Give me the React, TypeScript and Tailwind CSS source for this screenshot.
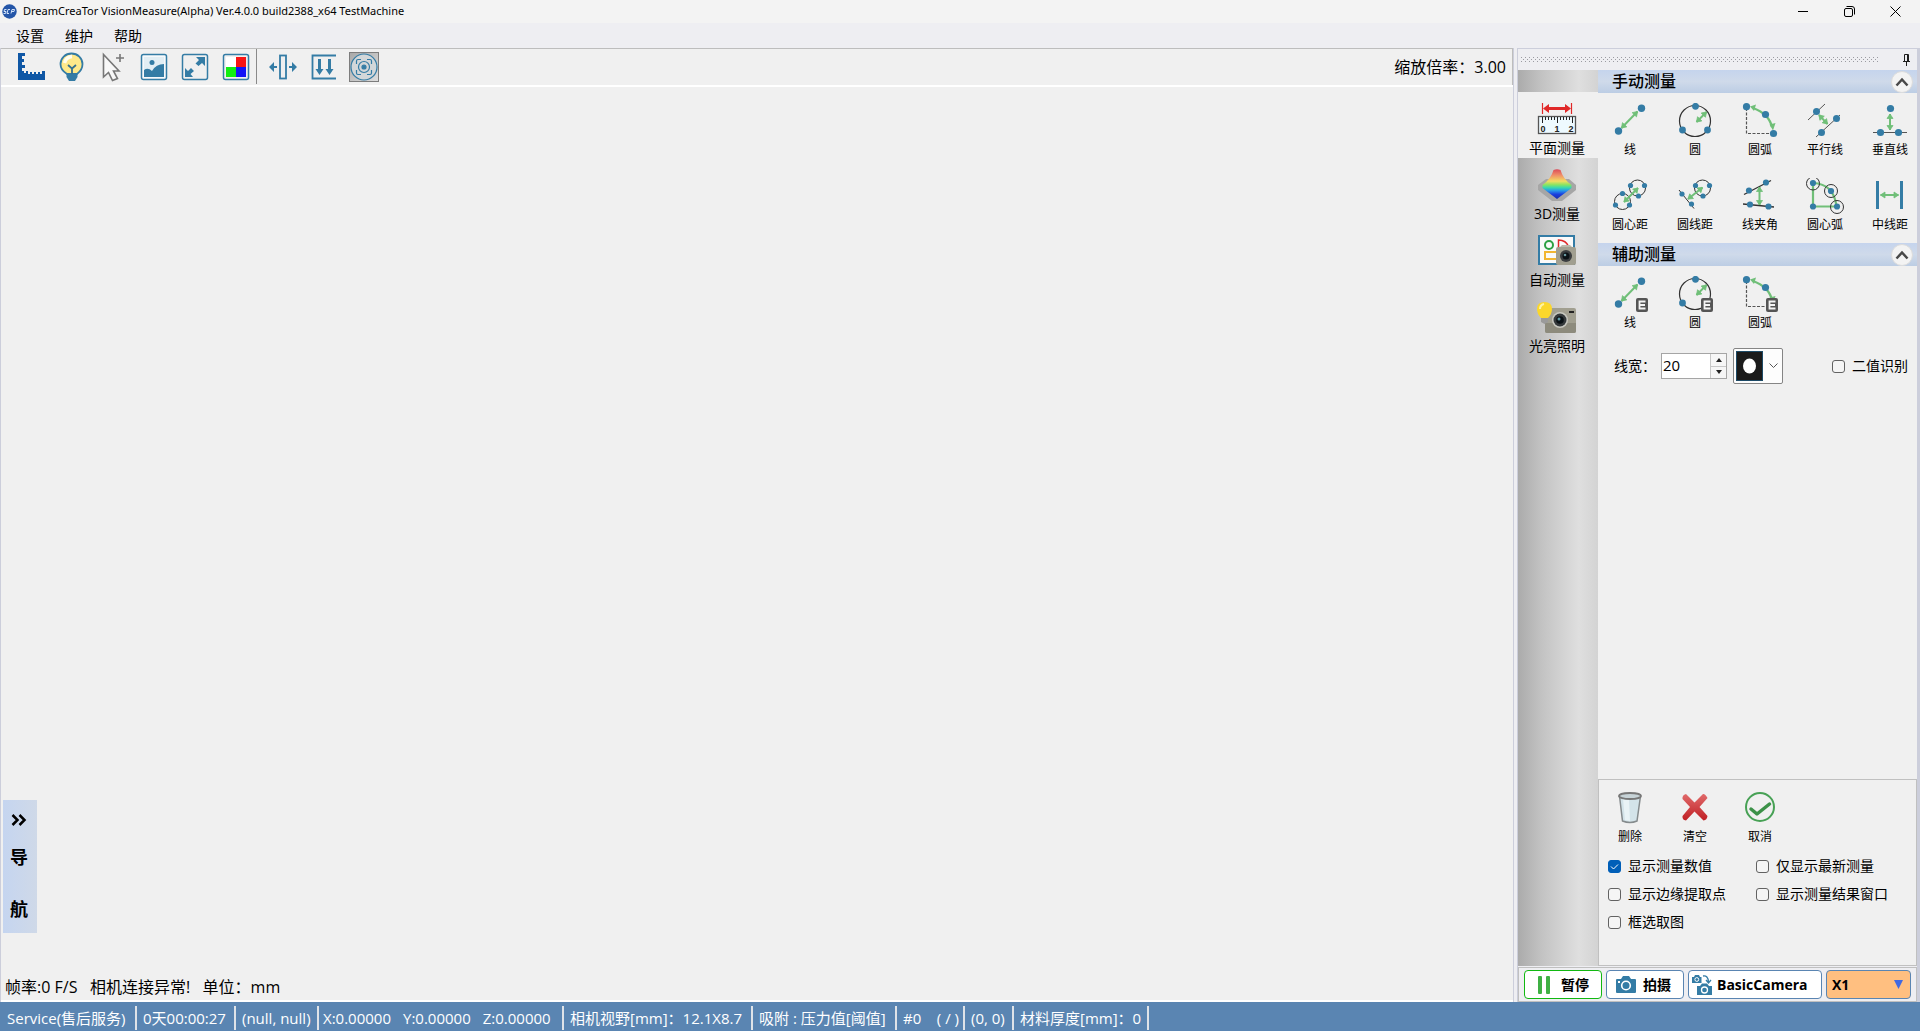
import { useState, type ReactNode } from "react";
import clsx from "clsx";

const BLUE = "#347ca5";
const GREEN = "#70bf78";
const INK = "#333333";

/* ---------- shared icon parts ---------- */

function Dot({ x, y, r = 3 }: { x: number; y: number; r?: number }) {
  return <circle cx={x} cy={y} r={r} fill={BLUE} />;
}

// double-headed arrow between two points
function Arrow({ x1, y1, x2, y2 }: { x1: number; y1: number; x2: number; y2: number }) {
  const angle = (Math.atan2(y2 - y1, x2 - x1) * 180) / Math.PI;
  return (
    <g stroke={GREEN} fill={GREEN}>
      <line x1={x1} y1={y1} x2={x2} y2={y2} strokeWidth="2" />
      <path d="M0 0L-4.5 -3V3Z" strokeWidth="0.8" transform={`translate(${x2} ${y2}) rotate(${angle})`} />
      <path d="M0 0L-4.5 -3V3Z" strokeWidth="0.8" transform={`translate(${x1} ${y1}) rotate(${angle + 180})`} />
    </g>
  );
}

function ExtendBadge() {
  return (
    <g>
      <rect x="25" y="22" width="12" height="14" rx="2" fill="#555" />
      <path d="M34.5 25.5H28.5V32.5H34.5M28.5 29H34" fill="none" stroke="#f4f4f4" strokeWidth="1.8" />
    </g>
  );
}

function ToolSvg({ children }: { children: ReactNode }) {
  return (
    <svg width="38" height="37" viewBox="0 0 38 37" fill="none" aria-hidden="true">
      {children}
    </svg>
  );
}

const lineArt = (
  <>
    <Arrow x1={10.5} y1={25} x2={26.5} y2={8.5} />
    <Dot x={7.5} y={28} r={3.7} />
    <Dot x={30.5} y={5.2} r={3.7} />
  </>
);

const circleArt = (
  <>
    <circle cx="19" cy="18" r="15.5" stroke={INK} strokeWidth="1.2" />
    <Arrow x1={20.5} y1={19} x2={30.5} y2={9} />
    <Dot x={19.5} y={3.3} r={3.4} />
    <Dot x={6.5} y={27} r={3.4} />
    <Dot x={31.5} y={27} r={3.4} />
  </>
);

const arcArt = (
  <>
    <path d="M5.5 5V30.5H31" stroke="#555" strokeWidth="1.2" strokeDasharray="3 1.5" />
    <path d="M12 5Q28 11 31 24" stroke={GREEN} strokeWidth="2.4" />
    <path d="M9 3.5L15 1.500L13 8ZM32 27.500L28.500 21.500L34.500 20Z" fill={GREEN} />
    <Dot x={5.5} y={3.7} r={3.6} />
    <Dot x={24.5} y={11.5} r={3.6} />
    <Dot x={32.5} y={30.5} r={3.6} />
  </>
);

type Tool = { label: string; icon: ReactNode };

const manualTools: Tool[] = [
  { label: "线", icon: lineArt },
  { label: "圆", icon: circleArt },
  { label: "圆弧", icon: arcArt },
  {
    label: "平行线",
    icon: (
      <>
        <path d="M2 17L19 1M10 34L34 12" stroke="#555" />
        <Arrow x1={13} y1={12} x2={21.5} y2={21} />
        <Dot x={10.5} y={8.5} r={3.5} />
        <Dot x={30.5} y={15.5} r={3.5} />
        <Dot x={15.5} y={29.5} r={3.5} />
      </>
    ),
  },
  {
    label: "垂直线",
    icon: (
      <>
        <path d="M2 29.5H36" stroke="#555" />
        <Arrow x1={19} y1={11} x2={19} y2={27} />
        <Dot x={19.5} y={5.5} r={3.6} />
        <Dot x={9.5} y={29.5} r={3.6} />
        <Dot x={27.5} y={29.5} r={3.6} />
      </>
    ),
  },
  {
    label: "圆心距",
    icon: (
      <>
        <circle cx="26.5" cy="10" r="8" stroke={INK} />
        <circle cx="11.5" cy="23.5" r="8" stroke={INK} />
        <Arrow x1={13} y1={24} x2={27} y2={10} />
        <Dot x={19.5} y={7.5} r={2.6} />
        <Dot x={33.5} y={7.5} r={2.6} />
        <Dot x={27.5} y={18} r={2.6} />
        <Dot x={11.5} y={15.5} r={2.6} />
        <Dot x={4.5} y={27} r={2.6} />
        <Dot x={18.5} y={27} r={2.6} />
      </>
    ),
  },
  {
    label: "圆线距",
    icon: (
      <>
        <circle cx="26.5" cy="10" r="8" stroke={INK} />
        <path d="M3 12L18 30.5" stroke={INK} />
        <Arrow x1={12} y1={21} x2={26.5} y2={9.5} />
        <Dot x={19.5} y={7.5} r={2.6} />
        <Dot x={33.5} y={7.5} r={2.6} />
        <Dot x={27} y={18} r={2.6} />
        <Dot x={6} y={16} r={2.6} />
        <Dot x={15.5} y={26} r={2.6} />
      </>
    ),
  },
  {
    label: "线夹角",
    icon: (
      <>
        <path d="M3 16.5L30 2.5M2 26L33 29" stroke={INK} strokeWidth="1.4" />
        <Arrow x1={18.5} y1={9} x2={18.5} y2={27} />
        <Dot x={8} y={12.5} r={3.1} />
        <Dot x={25} y={4.5} r={3.1} />
        <Dot x={9} y={26.5} r={3.1} />
        <Dot x={27.5} y={28.5} r={3.1} />
      </>
    ),
  },
  {
    label: "圆心弧",
    icon: (
      <>
        <path d="M7 5Q28 6 30.5 28.5H7Z" stroke={GREEN} strokeWidth="2.2" />
        <circle cx="7" cy="5.5" r="6.5" stroke={INK} />
        <circle cx="25" cy="13" r="6.5" stroke={INK} />
        <circle cx="31" cy="29" r="6.5" stroke={INK} />
        <Dot x={7} y={5} r={3.1} />
        <Dot x={25} y={13} r={3.1} />
        <Dot x={31} y={28.5} r={3.1} />
        <Dot x={7} y={28.5} r={3.1} />
      </>
    ),
  },
  {
    label: "中线距",
    icon: (
      <>
        <path d="M6.5 3V31M30.5 3V31" stroke={BLUE} strokeWidth="3" />
        <Arrow x1={9.5} y1={17} x2={27.5} y2={17} />
      </>
    ),
  },
];

const assistTools: Tool[] = [
  { label: "线", icon: <>{lineArt}<ExtendBadge /></> },
  { label: "圆", icon: <>{circleArt}<ExtendBadge /></> },
  { label: "圆弧", icon: <>{arcArt}<ExtendBadge /></> },
];

const editTools: Tool[] = [
  {
    label: "删除",
    icon: (
      <>
        <path d="M8.5 6L11.500 31Q19 34 26 31L29.5 6Z" fill="#d3e3e9" stroke="#858b8d" strokeWidth="1.5" />
        <path d="M12 9L14 30L19 31L18 10Z" fill="#e9f3f6" />
        <ellipse cx="19" cy="6" rx="11" ry="3" fill="#c7d3d7" stroke="#777" strokeWidth="1.8" />
      </>
    ),
  },
  {
    label: "清空",
    icon: (
      <>
        <defs>
          <linearGradient id="red" x1="0" y1="0" x2="0" y2="1">
            <stop offset="0" stopColor="#e06a6a" />
            <stop offset="1" stopColor="#c01f24" />
          </linearGradient>
        </defs>
        <path
          d="M10 4L18.5 12.5L27 4Q29 3.5 31.5 8L23.5 17L31.5 26Q31 30 27.5 30.5L18.5 21.5L10 30.5Q6 30 6.5 26L14 17L6.5 9Q6 5 10 4Z"
          fill="url(#red)"
        />
      </>
    ),
  },
  {
    label: "取消",
    icon: (
      <>
        <circle cx="19" cy="17" r="14" stroke="#47a155" strokeWidth="2" />
        <path d="M10 19L16 24L28.5 14" stroke="#3c9148" strokeWidth="3.5" strokeLinecap="round" strokeLinejoin="round" />
      </>
    ),
  },
];

/* ---------- toolbar ---------- */

const toolbarLeft: Tool[] = [
  {
    label: "标尺",
    icon: (
      <path
        d="M2 1H9V4H6V7H8V10H6V13H9V16H6V19H8V21H10V19H12V22H14V20H16V22H18V20H20V22H22V20H24V22H26V19H29V28H2Z"
        fill="#0f57a5"
      />
    ),
  },
  {
    label: "灯光",
    icon: (
      <>
        <path d="M10 22Q3.500 18 3.500 12A11 10.500 0 0 1 25.500 12Q25.500 18 20 22Z" fill="#ffe98a" stroke={BLUE} strokeWidth="1.8" />
        <path d="M7.5 11Q9 5 15 4.5" stroke="#fffdf0" strokeWidth="3.5" />
        <path d="M11 13L15 16.5L19 13M15 16.5V22" stroke="#36708f" strokeWidth="1.8" />
        <path d="M9.5 22H20.500V25L18 29H12L9.5 25Z" fill={BLUE} />
      </>
    ),
  },
  {
    label: "选择",
    icon: (
      <>
        <path d="M5.5 2.500V25L10.5 20.5L14.500 28.5L19.500 26.5L15.500 19H21Z" fill="#f8f8f8" stroke="#777" strokeWidth="1.6" />
        <path d="M22 2V10M18 6H26" stroke="#777" strokeWidth="1.6" />
      </>
    ),
  },
  {
    label: "图像",
    icon: (
      <>
        <rect x="2.5" y="2.5" width="25" height="25" rx="2" fill="#f6f9fb" stroke={BLUE} strokeWidth="1.5" />
        <path d="M5 5H25V15Q18 15 14 20Q10 16 5 20Z" fill="#e2eef4" />
        <path d="M5 18Q9 15 13 19Q17 12 25 12V25H5Z" fill={BLUE} />
        <circle cx="13" cy="10.5" r="2.5" fill={BLUE} />
      </>
    ),
  },
  {
    label: "适应窗口",
    icon: (
      <>
        <rect x="2.5" y="2.5" width="25" height="25" rx="2" stroke={BLUE} strokeWidth="1.5" />
        <path d="M16 5H25V14L22 11L18.5 14L15.5 11.5L19 8ZM5 16L8 19L11 16L14 19L10.500 22L13 25H5Z" fill={BLUE} />
      </>
    ),
  },
  {
    label: "颜色",
    icon: (
      <>
        <rect x="2.5" y="2.5" width="25" height="25" rx="2" stroke={BLUE} strokeWidth="1.5" />
        <path d="M5 5H15V15H5Z" fill="#fff" />
        <path d="M15 5H25V15H15Z" fill="#f81414" />
        <path d="M5 15H15V25H5Z" fill="#12ee12" />
        <path d="M15 15H25V25H15Z" fill="#1414f6" />
      </>
    ),
  },
];

const toolbarRight: Tool[] = [
  {
    label: "水平对齐",
    icon: (
      <>
        <rect x="12" y="3.5" width="6" height="23" stroke={BLUE} strokeWidth="1.8" />
        <path d="M1 15L6 10V14H9V16H6V20ZM29 15L24 10V14H21V16H24V20Z" fill={BLUE} />
      </>
    ),
  },
  {
    label: "向下对齐",
    icon: (
      <>
        <path d="M27 3.5H3.5V26.5H27" stroke={BLUE} strokeWidth="1.8" />
        <path d="M9 7H12V17H14.5L10.5 23L6.5 17H9ZM19 7H22V17H24.5L20.5 23L16.5 17H19Z" fill={BLUE} />
      </>
    ),
  },
];

function ToolbarButton({ tool }: { tool: Tool }) {
  return (
    <button type="button" aria-label={tool.label} className="flex w-[41px] items-center justify-center">
      <svg width="30" height="30" viewBox="0 0 30 30" fill="none" aria-hidden="true">
        {tool.icon}
      </svg>
    </button>
  );
}

function Toolbar() {
  return (
    <div className="flex h-[37px] items-stretch border-t border-r border-[#bdbdbd] pr-[6px] pb-px pl-[9px]">
      {toolbarLeft.map((tool) => (
        <ToolbarButton key={tool.label} tool={tool} />
      ))}
      <div className="mr-[5px] w-px bg-[#8a8a8a]" />
      {toolbarRight.map((tool) => (
        <ToolbarButton key={tool.label} tool={tool} />
      ))}
      <button
        type="button"
        aria-label="自动对焦"
        aria-pressed="true"
        className="ml-[5px] flex size-[30px] items-center justify-center self-center border border-[#7d7d7d] bg-linear-to-br from-[#a9a9a9] to-[#dedede]"
      >
        <svg width="28" height="28" viewBox="0 0 28 28" fill="none" stroke={BLUE} strokeWidth="1.2" aria-hidden="true">
          <circle cx="14" cy="14" r="13" fill="#d3d7d9" />
          <path d="M6.5 11V8Q6.5 6.5 8 6.5H11M17 6.5H20Q21.5 6.5 21.5 8V11M21.5 17V20Q21.5 21.5 20 21.5H17M11 21.5H8Q6.5 21.5 6.5 20V17" />
          <circle cx="14" cy="14" r="5.5" />
          <circle cx="14" cy="14" r="2" fill={BLUE} />
        </svg>
      </button>
      <span className="ml-auto self-center text-base leading-6">缩放倍率：3.00</span>
    </div>
  );
}

/* ---------- title bar and menu ---------- */

function TitleBar() {
  return (
    <header className="flex h-[23px] items-center bg-[#f3f3f3] pr-[2px] pl-[2px]">
      <svg width="15" height="15" viewBox="0 0 15 15" fill="none" aria-hidden="true">
        <circle cx="7.5" cy="7.5" r="7.2" fill="#2456a8" />
        <path d="M4.5 5.5H2.5L2 7.5H4L3.5 9.5H1.5M8 5.5H6L5 9.5H7M9 9.5L10 5.5H12.5L12 7.5H10" stroke="#cfe0f8" />
      </svg>
      <h1 className="ml-[6px] font-['Noto_Sans',sans-serif] text-[11px]">DreamCreaTor VisionMeasure(Alpha) Ver.4.0.0 build2388_x64 TestMachine</h1>
      <div className="ml-auto flex h-full">
        <button type="button" aria-label="最小化" className="flex w-[45px] items-center justify-center">
          <svg width="11" height="11" viewBox="0 0 11 11" stroke="#000"><path d="M0 5.5H10" /></svg>
        </button>
        <button type="button" aria-label="还原" className="flex w-[46px] items-center justify-center">
          <svg width="11" height="11" viewBox="0 0 11 11" fill="none" stroke="#000">
            <rect x="0.5" y="2.5" width="8" height="8" rx="1.5" />
            <path d="M2.5 0.5H8Q10.5 0.5 10.5 3V8.5" />
          </svg>
        </button>
        <button type="button" aria-label="关闭" className="flex w-[46px] items-center justify-center">
          <svg width="11" height="11" viewBox="0 0 11 11" stroke="#000"><path d="M0.5 0.5L10.5 10.5M10.5 0.5L0.5 10.5" /></svg>
        </button>
      </div>
    </header>
  );
}

function MenuBar() {
  return (
    <nav className="flex h-[25px] items-center gap-[21px] pl-4 text-sm">
      {["设置", "维护", "帮助"].map((item) => (
        <button key={item} type="button">{item}</button>
      ))}
    </nav>
  );
}

/* ---------- side panel ---------- */

const modes: Tool[] = [
  {
    label: "平面测量",
    icon: (
      <>
        <path d="M5.5 1V12M34.5 1V12" stroke="#e02828" strokeWidth="1.2" />
        <path d="M6 6.5L12 2V5H28V2L34 6.5L28 11V8H12V11Z" fill="#e02828" />
        <rect x="1.5" y="14.5" width="37" height="17" fill="#eefaff" stroke="#555" strokeWidth="1.3" />
        <path d="M5.5 15V21M8.500 15V18M11.500 15V18M14.500 15V18M17.500 15V18M20.5 15V21M23.500 15V18M26.500 15V18M29.500 15V18M32.500 15V18M35.500 15V21" stroke="#222" />
        <g fill="#222" fontSize="9" fontWeight="700" fontFamily="Liberation Sans, sans-serif" textAnchor="middle">
          <text x="6" y="30">0</text>
          <text x="20" y="30">1</text>
          <text x="34" y="30">2</text>
        </g>
      </>
    ),
  },
  {
    label: "3D测量",
    icon: (
      <>
        <defs>
          <linearGradient id="surface" x1="0" y1="0" x2="0" y2="1">
            <stop offset="0" stopColor="#dc4a58" />
            <stop offset="0.2" stopColor="#f08f68" />
            <stop offset="0.4" stopColor="#f3dc62" />
            <stop offset="0.52" stopColor="#8be462" />
            <stop offset="0.62" stopColor="#38d8b0" />
            <stop offset="0.72" stopColor="#2798ea" />
            <stop offset="0.84" stopColor="#1a3fe0" />
            <stop offset="1" stopColor="#1c2fa8" />
          </linearGradient>
        </defs>
        <path d="M1 17L9 11H32L39 17V22L25 33H15L1 22Z" fill="#a6a6a6" />
        <path d="M16.500 2Q20 0.500 23.500 2Q26 11 34.500 17V20L20 31L5.500 20V17Q14 11 16.500 2Z" fill="url(#surface)" />
      </>
    ),
  },
  {
    label: "自动测量",
    icon: (
      <>
        <rect x="2" y="2" width="35" height="28" fill="#fafafa" stroke={BLUE} strokeWidth="2" />
        <circle cx="12" cy="11" r="4" stroke="#2da043" strokeWidth="2" />
        <path d="M21.5 14V6Q29 6 32 13" stroke="#e02828" strokeWidth="1.5" />
        <rect x="8" y="18" width="13" height="7" stroke="#f2b632" strokeWidth="2" />
        <rect x="19" y="13" width="20" height="18" rx="2" fill="#a19f90" />
        <path d="M23 13L25 11H33L35 13Z" fill="#bab8aa" />
        <circle cx="29" cy="22" r="6" fill="#3b3e40" />
        <circle cx="29" cy="22" r="3.5" fill="#0b1216" />
        <circle cx="28" cy="21" r="1.3" fill="#6b98a0" />
      </>
    ),
  },
  {
    label: "光亮照明",
    icon: (
      <>
        <rect x="8" y="8" width="31" height="25" rx="2" fill="#a19f90" />
        <path d="M8 23H39V31Q39 33 37 33H10Q8 33 8 31Z" fill="#8d8b7d" />
        <rect x="32" y="11" width="5" height="2" fill="#222" />
        <circle cx="23" cy="20" r="8" fill="#c8c8c0" />
        <circle cx="23" cy="20" r="6.5" fill="#34393b" />
        <circle cx="23" cy="20" r="3.8" fill="#0a1115" />
        <circle cx="22" cy="19" r="1.5" fill="#5f98a2" />
        <path d="M0 9Q0 2 7.5 2Q15 2 15 9Q15 14 11 18V20H4V18Q0 14 0 9Z" fill="#fbd72b" />
        <path d="M3 9Q3 5 7 4" stroke="#fff3a0" strokeWidth="2" />
        <path d="M4 18H11V22L7.5 24L4 22Z" fill="#9a9a9a" />
      </>
    ),
  },
];

function ModeTabs() {
  const [active, setActive] = useState("平面测量");
  return (
    <div className="w-20 bg-[linear-gradient(to_right,#ababab,#c3c3c3_30%,#dfdfdf_76%,#d3d3d3)] pt-[22px]">
      {modes.map((mode) => (
        <button
          key={mode.label}
          type="button"
          aria-pressed={mode.label === active}
          onClick={() => setActive(mode.label)}
          className={clsx("flex h-[66px] w-full flex-col items-center pt-2.5 pr-[2px] text-sm leading-5", mode.label === active && "bg-[#f0f0f0]")}
        >
          <svg width="40" height="36" viewBox="0 0 40 36" fill="none" aria-hidden="true">
            {mode.icon}
          </svg>
          <span>{mode.label}</span>
        </button>
      ))}
    </div>
  );
}

function SectionHeader({ title }: { title: string }) {
  return (
    <div className="flex h-[23px] items-center justify-between bg-linear-to-b from-[#c5d4ed] via-[#cfdaea] to-[#bccde4] pr-[4px] pl-[14px]">
      <h2 className="pb-[2px] text-base leading-5 font-medium">{title}</h2>
      <button
        type="button"
        aria-label={`收起${title}`}
        className="flex size-[22px] items-center justify-center rounded-full border border-[#dcdcdc] bg-[#f3f3f3]"
      >
        <svg width="14" height="10" viewBox="0 0 14 10" fill="none" stroke="#484848" strokeWidth="2.5">
          <path d="M1.5 8.5L7 2.5L12.5 8.5" />
        </svg>
      </button>
    </div>
  );
}

function ToolGrid({ tools }: { tools: Tool[] }) {
  return (
    <div className="grid grid-cols-[repeat(5,54px)] gap-x-[11px] pl-[5px]">
      {tools.map((tool) => (
        <button key={tool.label} type="button" className="flex h-[75px] flex-col items-center pt-[10px] text-xs leading-5">
          <ToolSvg>{tool.icon}</ToolSvg>
          <span>{tool.label}</span>
        </button>
      ))}
    </div>
  );
}

function Check({ label, defaultChecked }: { label: string; defaultChecked?: boolean }) {
  return (
    <label className="flex items-center gap-[7px] text-sm leading-5">
      <span className="grid size-[13px] place-items-center">
        <input
          type="checkbox"
          defaultChecked={defaultChecked}
          className="peer col-start-1 row-start-1 size-[13px] appearance-none rounded-[3px] border border-[#626262] bg-[#f5f5f5] checked:border-[#005fb8] checked:bg-[#005fb8]"
        />
        <svg viewBox="0 0 9 9" fill="none" stroke="#fff" className="pointer-events-none invisible col-start-1 row-start-1 size-[9px] peer-checked:visible">
          <path d="M1 4.5L3.5 7L8 2.5" />
        </svg>
      </span>
      {label}
    </label>
  );
}

function LineWidthRow() {
  const [width, setWidth] = useState(20);
  return (
    <div className="mt-[7px] flex h-9 items-center pr-[9px] pl-4">
      <label htmlFor="line-width" className="text-sm">线宽：</label>
      <div className="ml-[5px] flex h-[26px] w-[66px] border border-[#a5a5a5] bg-white">
        <input
          id="line-width"
          value={width}
          onChange={(e) => setWidth(Number(e.target.value) || 0)}
          className="w-full min-w-0 pb-[2px] pl-px text-[15px] leading-5 outline-none"
        />
        <div className="flex w-4 shrink-0 flex-col border-l border-[#c8c8c8] bg-[#f6f6f6]">
          <button type="button" aria-label="增加" onClick={() => setWidth(width + 1)} className="flex flex-1 items-center justify-center border-b border-[#c8c8c8]">
            <svg width="6" height="4" viewBox="0 0 6 4"><path d="M0 4L3 0L6 4Z" fill="#222" /></svg>
          </button>
          <button type="button" aria-label="减少" onClick={() => setWidth(width - 1)} className="flex flex-1 items-center justify-center">
            <svg width="6" height="4" viewBox="0 0 6 4"><path d="M0 0L3 4L6 0Z" fill="#222" /></svg>
          </button>
        </div>
      </div>
      <div className="relative ml-[6px] flex h-9 w-[50px] items-center justify-between rounded-[2px] border border-[#858585] bg-[#fdfdfd] pr-[4px] pl-[2px]">
        <svg width="27" height="30" viewBox="0 0 27 30" aria-hidden="true">
          <rect x="0.5" y="0.5" width="26" height="29" fill="#1b1b1b" stroke="#1d4a66" />
          <ellipse cx="13.5" cy="15" rx="6.5" ry="7.5" fill="#fff" />
        </svg>
        <svg width="9" height="6" viewBox="0 0 9 6" fill="none" stroke="#555"><path d="M0.5 0.5L4.5 4.5L8.5 0.5" /></svg>
        <select aria-label="识别形状" className="absolute inset-0 opacity-0">
          <option>●</option>
        </select>
      </div>
      <div className="ml-auto">
        <Check label="二值识别" />
      </div>
    </div>
  );
}

function CameraGlyph() {
  return (
    <svg width="22" height="22" viewBox="0 0 22 22" aria-hidden="true">
      <path d="M2 5H6L8 2H14L16 5H20Q21 5 21 6V18Q21 19 20 19H2Q1 19 1 18V6Q1 5 2 5Z" fill={BLUE} />
      <circle cx="11" cy="11.5" r="4.3" fill={BLUE} stroke="#fff" strokeWidth="1.6" />
      <rect x="3" y="7" width="2" height="2" fill="#fff" />
    </svg>
  );
}

const cameraButton = "flex h-[29px] items-center rounded-[4px] border bg-white text-sm leading-5 font-bold";

function CameraBar() {
  return (
    <div className="mt-px flex h-[35px] items-center gap-1 border border-[#c0c0c0] pr-[5px] pl-[5px]">
      <button type="button" className={clsx(cameraButton, "w-[78px] border-[#11b811] pl-[13px]")}>
        <svg width="13" height="18" viewBox="0 0 13 18" fill="#3fb044" aria-hidden="true">
          <rect width="4" height="18" rx="1" />
          <rect x="8" width="4" height="18" rx="1" />
        </svg>
        <span className="ml-[10px]">暂停</span>
      </button>
      <button type="button" className={clsx(cameraButton, "w-[78px] border-[#5a85b2] pl-[8px]")}>
        <CameraGlyph />
        <span className="ml-[6px]">拍摄</span>
      </button>
      <button type="button" className={clsx(cameraButton, "min-w-0 flex-1 border-[#5a85b2] pl-[2px]")}>
        <svg width="22" height="24" viewBox="0 0 22 24" fill="none" aria-hidden="true">
          <path d="M1 4H3L4 2H8L9 4H10.5V10H1Z" fill={BLUE} />
          <circle cx="5.8" cy="6.5" r="1.9" stroke="#fff" />
          <path d="M12 3Q17 2 17.500 9M15 7L17.500 10L20 7" stroke={BLUE} strokeWidth="1.3" />
          <path d="M6 13H9L11 10.5H16L18 13H21V22H6Z" fill={BLUE} />
          <circle cx="13.5" cy="17" r="3" stroke="#fff" strokeWidth="1.3" />
        </svg>
        <span className="ml-[4px]">BasicCamera</span>
      </button>
      <div className="relative">
        <select aria-label="倍率" className="h-[29px] w-[85px] appearance-none rounded-[4px] border border-[#5a85b2] bg-[#ffbf80] pl-[5px] text-sm font-bold">
          <option>X1</option>
        </select>
        <svg width="9" height="9" viewBox="0 0 9 9" className="pointer-events-none absolute top-[10px] right-[8px]">
          <path d="M0 0H9L4.500 9Z" fill="#4169e1" />
        </svg>
      </div>
    </div>
  );
}

function SidePanel() {
  return (
    <aside className="flex w-[403px] shrink-0 flex-col border border-r-[3px] border-b-0 border-[#cccedb] bg-[#eeeef2]">
      <div className="flex h-[21px] items-center justify-between pr-[6px] pl-[3px]">
        <svg width="358" height="6" aria-hidden="true">
          <defs>
            <pattern id="grip" width="4" height="4" patternUnits="userSpaceOnUse">
              <path d="M0 0H1V1H0ZM2 2H3V3H2Z" fill="#9b9ba2" />
            </pattern>
          </defs>
          <rect width="358" height="5" fill="url(#grip)" />
        </svg>
        <button type="button" aria-label="固定面板">
          <svg width="9" height="12" viewBox="0 0 9 12" fill="none" stroke="#1e1e1e">
            <path d="M2.5 7V0.5H6.5V7M5.5 1V7M1 7.5H8M4.5 8V12" />
          </svg>
        </button>
      </div>
      <div className="flex min-h-0 flex-1 bg-[#f0f0f0]">
        <ModeTabs />
        <div className="flex min-w-0 flex-1 flex-col">
          <SectionHeader title="手动测量" />
          <ToolGrid tools={manualTools} />
          <SectionHeader title="辅助测量" />
          <ToolGrid tools={assistTools} />
          <LineWidthRow />
          <section className="mt-auto h-[187px] border border-[#c0c0c0]">
            <div className="-ml-px">
              <ToolGrid tools={editTools} />
            </div>
            <div className="mt-px grid grid-cols-[148px_1fr] gap-y-2 pl-[9px]">
              <Check label="显示测量数值" defaultChecked />
              <Check label="仅显示最新测量" />
              <Check label="显示边缘提取点" />
              <Check label="显示测量结果窗口" />
              <Check label="框选取图" />
            </div>
          </section>
        </div>
      </div>
      <CameraBar />
    </aside>
  );
}

/* ---------- work area and status bar ---------- */

function Workspace() {
  return (
    <main className="flex min-w-0 flex-1 flex-col border-r border-l border-[#cccedb] bg-[#f0f0f0]">
      <Toolbar />
      <div className="flex flex-1 flex-col items-start border-t-2 border-b-2 border-white pb-px">
        <button
          type="button"
          aria-label="展开导航"
          className="mt-auto ml-[2px] flex h-[133px] w-[34px] flex-col items-center bg-linear-to-r from-[#c5d5f0] to-[#cfd9e8] pt-[7px] pr-[2px] text-lg leading-6 font-bold"
        >
          <svg width="16" height="24" viewBox="0 0 16 24" fill="none" stroke="#000" strokeWidth="2.5" aria-hidden="true">
            <path d="M1.5 8L6.5 13L1.5 18M8.5 8L13.5 13L8.5 18" />
          </svg>
          <span className="mt-[14px]">导</span>
          <span className="mt-[28px]">航</span>
        </button>
        <p className="mt-[42px] pl-[4px] text-base leading-6 whitespace-pre">帧率:0 F/S   相机连接异常!   单位：mm</p>
      </div>
    </main>
  );
}

function StatusCell({ className, children }: { className: string; children: ReactNode }) {
  return (
    <div className={clsx("flex h-6 shrink-0 items-center border-r-2 border-[#dfe3e8] whitespace-pre", className)}>
      {children}
    </div>
  );
}

function StatusBar() {
  return (
    <footer className="flex h-[29px] items-center overflow-hidden bg-[#5a85b2] pt-[2px] text-[15px] leading-5 text-white">
      <StatusCell className="w-[137px] pl-[7px]">Service(售后服务)</StatusCell>
      <StatusCell className="w-[99px] pl-[6px]">0天00:00:27</StatusCell>
      <StatusCell className="w-[83px] pl-[6px]">(null, null)</StatusCell>
      <StatusCell className="w-[245px] gap-[12px] pl-[4px]">
        <span>X:0.00000</span>
        <span>Y:0.00000</span>
        <span>Z:0.00000</span>
      </StatusCell>
      <StatusCell className="w-[189px] pl-[6px]">相机视野[mm]：12.1X8.7</StatusCell>
      <StatusCell className="w-[144px] pl-[6px]">吸附 : 压力值[阈值]</StatusCell>
      <StatusCell className="w-[68px] justify-between pr-[4px] pl-[6px]">
        <span>#0</span>
        <span>( / )</span>
      </StatusCell>
      <StatusCell className="w-[49px] pl-[6px]">(0, 0)</StatusCell>
      <StatusCell className="w-[135px] pl-[6px]">材料厚度[mm]：0</StatusCell>
    </footer>
  );
}

export default function App() {
  return (
    <div className="flex h-screen flex-col bg-[#eeeef2] font-['Open_Sans','Noto_Sans_CJK_SC',sans-serif] text-black">
      <TitleBar />
      <MenuBar />
      <div className="flex min-h-0 flex-1 gap-[3px]">
        <Workspace />
        <SidePanel />
      </div>
      <StatusBar />
    </div>
  );
}
